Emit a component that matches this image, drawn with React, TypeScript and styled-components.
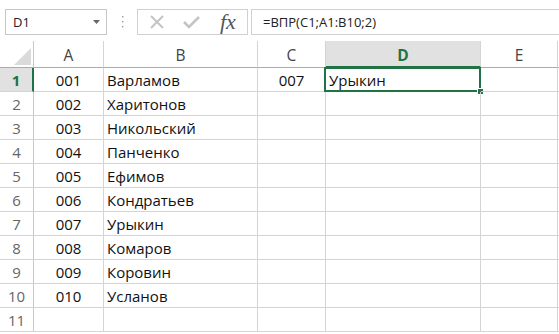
import React from 'react';
import styled, { createGlobalStyle } from 'styled-components';

const Global = createGlobalStyle`
  html, body { margin: 0; padding: 0; background: #fff; }
  body { font-family: "Open Sans", "Noto Sans", sans-serif; }
  #root { width: 559px; height: 334px; }
`;

const Window = styled.div`
  width: 559px;
  height: 334px;
  overflow: hidden;
  background: #fff;
  display: flex;
  flex-direction: column;
`;

const Toolbar = styled.div`
  height: 41px;
  flex: none;
  box-sizing: border-box;
  padding-top: 9px;
  display: flex;
  align-items: flex-start;
`;

const NameBox = styled.div`
  margin-left: 5px;
  width: 102px;
  height: 26px;
  box-sizing: border-box;
  border: 1px solid #c6c6c6;
  display: flex;
  align-items: center;
  padding: 0 6px 0 7px;
  font-size: 13px;
  color: #222;
`;

const NameText = styled.span`
  flex: 1;
`;

const Grip = styled.div`
  margin-left: 14px;
  width: 3px;
  height: 26px;
  display: flex;
  align-items: center;
`;

const FxGroup = styled.div`
  margin-left: 13px;
  width: 111px;
  height: 26px;
  box-sizing: border-box;
  border: 1px solid #d0d0d0;
  display: flex;
  align-items: center;
  padding-left: 12px;
  gap: 19px;
`;

const FxLabel = styled.span`
  font-family: "Liberation Serif", "DejaVu Serif", serif;
  font-style: italic;
  font-size: 22px;
  color: #555;
  margin-left: 1px;
  line-height: 1;
`;

const FormulaBox = styled.div`
  margin-left: 3px;
  flex: 1;
  height: 26px;
  box-sizing: border-box;
  border: 1px solid #d0d0d0;
  border-right: none;
  display: flex;
  align-items: center;
  padding-left: 11px;
  font-size: 13px;
  color: #222;
`;

const Sheet = styled.div`
  display: grid;
  grid-template-columns: 34px 70px 154px 68px 155px 77px 1fr;
  grid-template-rows: 27px;
  grid-auto-rows: 24px;
`;

const Corner = styled.div`
  box-sizing: border-box;
  border-right: 1px solid #c8c8c8;
  border-bottom: 1px solid #ababab;
  display: flex;
  justify-content: flex-end;
  align-items: flex-end;
  padding: 0 2px 2px 0;
`;

const ColHeader = styled.div<{ $active?: boolean }>`
  box-sizing: border-box;
  border-right: 1px solid #d4d4d4;
  border-bottom: ${p => (p.$active ? '2px solid #217346' : '1px solid #ababab')};
  background: ${p => (p.$active ? '#e1e1e1' : '#fff')};
  color: ${p => (p.$active ? '#217346' : '#444')};
  font-weight: ${p => (p.$active ? 700 : 400)};
  font-size: 15.5px;
  display: flex;
  justify-content: center;
  align-items: center;
  padding-top: 2px;
`;

const RowHeader = styled.div<{ $active?: boolean }>`
  box-sizing: border-box;
  border-right: ${p => (p.$active ? '2px solid #217346' : '1px solid #c8c8c8')};
  border-bottom: 1px solid #d4d4d4;
  background: ${p => (p.$active ? '#e1e1e1' : '#fff')};
  color: ${p => (p.$active ? '#217346' : '#666')};
  font-weight: ${p => (p.$active ? 700 : 400)};
  font-size: 15px;
  display: flex;
  justify-content: center;
  align-items: flex-end;
  padding-bottom: 1px;
`;

const Cell = styled.div<{ $align?: 'left' | 'center' }>`
  position: relative;
  box-sizing: border-box;
  border-right: 1px solid #d4d4d4;
  border-bottom: 1px solid #d4d4d4;
  font-size: 15px;
  color: #111;
  display: flex;
  align-items: flex-end;
  justify-content: ${p => (p.$align === 'center' ? 'center' : 'flex-start')};
  padding: 0 0 1px ${p => (p.$align === 'center' ? '0' : '3px')};
  white-space: nowrap;
`;

const Selection = styled.div`
  position: absolute;
  left: -2px;
  top: -1px;
  right: -1px;
  bottom: -1px;
  border: 2px solid #217346;
  pointer-events: none;
`;

const Handle = styled.div`
  position: absolute;
  right: -5px;
  bottom: -5px;
  width: 5px;
  height: 5px;
  background: #217346;
  border: 1px solid #fff;
`;

const data: [string, string][] = [
  ['001', 'Варламов'],
  ['002', 'Харитонов'],
  ['003', 'Никольский'],
  ['004', 'Панченко'],
  ['005', 'Ефимов'],
  ['006', 'Кондратьев'],
  ['007', 'Урыкин'],
  ['008', 'Комаров'],
  ['009', 'Коровин'],
  ['010', 'Усланов'],
  ['', ''],
];

const cols = ['A', 'B', 'C', 'D', 'E'];

export default function App() {
  return (
    <Window>
      <Global />
      <Toolbar>
        <NameBox>
          <NameText>D1</NameText>
          <svg width="7" height="4" viewBox="0 0 7 4">
            <path d="M0 0 H7 L3.5 4 Z" fill="#666" />
          </svg>
        </NameBox>
        <Grip>
          <svg width="3" height="13" viewBox="0 0 3 13">
            <rect x="1" y="0" width="1.4" height="1.4" fill="#999" />
            <rect x="1" y="5" width="1.4" height="1.4" fill="#999" />
            <rect x="1" y="10" width="1.4" height="1.4" fill="#999" />
          </svg>
        </Grip>
        <FxGroup>
          <svg width="14" height="14" viewBox="0 0 14 14">
            <path d="M1 1 L13 13 M13 1 L1 13" stroke="#c4c4c4" strokeWidth="2" fill="none" />
          </svg>
          <svg width="17" height="13" viewBox="0 0 17 13">
            <path d="M1 6 L6 11 L16 1" stroke="#c4c4c4" strokeWidth="2.6" fill="none" />
          </svg>
          <FxLabel>fx</FxLabel>
        </FxGroup>
        <FormulaBox>=ВПР(C1;A1:B10;2)</FormulaBox>
      </Toolbar>
      <Sheet>
        <Corner>
          <svg width="17" height="17" viewBox="0 0 17 17">
            <path d="M17 0 V17 H0 Z" fill="#dadada" />
          </svg>
        </Corner>
        {cols.map(c => (
          <ColHeader key={c} $active={c === 'D'}>{c}</ColHeader>
        ))}
        <ColHeader />
        {data.map(([num, name], i) => (
          <React.Fragment key={i}>
            <RowHeader $active={i === 0}>{i + 1}</RowHeader>
            <Cell $align="center">{num}</Cell>
            <Cell>{name}</Cell>
            <Cell $align="center">{i === 0 ? '007' : ''}</Cell>
            <Cell>
              {i === 0 ? 'Урыкин' : ''}
              {i === 0 && (
                <Selection>
                  <Handle />
                </Selection>
              )}
            </Cell>
            <Cell />
            <Cell />
          </React.Fragment>
        ))}
      </Sheet>
    </Window>
  );
}
